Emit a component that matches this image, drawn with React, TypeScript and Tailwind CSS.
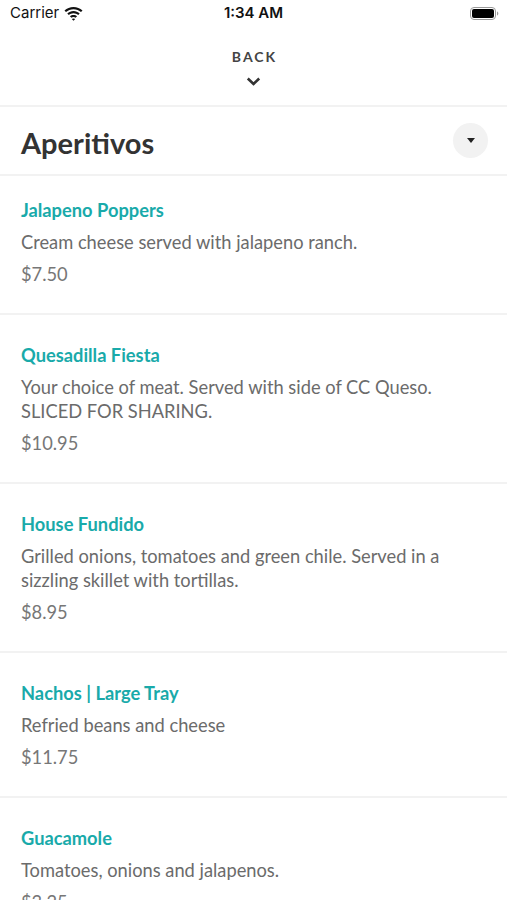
import React from "react";

const items = [
  { name: "Jalapeno Poppers", desc: ["Cream cheese served with jalapeno ranch."], price: "$7.50" },
  { name: "Quesadilla Fiesta", desc: ["Your choice of meat. Served with side of CC Queso.", "SLICED FOR SHARING."], price: "$10.95" },
  { name: "House Fundido", desc: ["Grilled onions, tomatoes and green chile. Served in a", "sizzling skillet with tortillas."], price: "$8.95" },
  { name: "Nachos | Large Tray", desc: ["Refried beans and cheese"], price: "$11.75" },
  { name: "Guacamole", desc: ["Tomatoes, onions and jalapenos."], price: "$3.25" },
];

function Wifi() {
  return (
    <svg width="19" height="14" viewBox="0 0 19 14" className="ml-[5px]">
      <path d="M9.5 2.2c2.9 0 5.5 1.1 7.5 2.9l1.5-1.6C16.1 1.3 12.9 0 9.5 0S2.9 1.3.5 3.5L2 5.1c2-1.8 4.6-2.9 7.5-2.9z" fill="#111" />
      <path d="M9.5 6.2c1.8 0 3.4.7 4.7 1.8l1.5-1.6C14 4.9 11.9 4 9.5 4S5 4.9 3.3 6.4L4.8 8c1.3-1.1 2.9-1.8 4.7-1.8z" fill="#111" />
      <path d="M9.5 10.1c.8 0 1.5.3 2 .7l1.6-1.6C12.1 8.4 10.9 7.9 9.5 7.9s-2.6.5-3.6 1.3l1.6 1.6c.5-.4 1.2-.7 2-.7z" fill="#111" />
      <path d="M9.5 13.8l1.7-1.8c-.5-.4-1.1-.6-1.7-.6s-1.2.2-1.7.6z" fill="#111" />
    </svg>
  );
}

function Battery() {
  return (
    <svg width="29" height="13" viewBox="0 0 29 13">
      <rect x="0.5" y="0.5" width="25" height="12" rx="3.5" fill="none" stroke="#999" />
      <rect x="2" y="2" width="22" height="9" rx="2" fill="#000" />
      <path d="M27 4.5v4c.8-.3 1.3-1.1 1.3-2s-.5-1.7-1.3-2z" fill="#999" />
    </svg>
  );
}

export default function App() {
  return (
    <div className="w-[507px] h-[900px] overflow-hidden bg-white" style={{ fontFamily: "Lato, 'Noto Sans', sans-serif" }}>
      {/* status bar */}
      <div className="relative h-[27px] flex items-center justify-between px-[10px]">
        <div className="flex items-center text-[15px] text-[#111]" style={{ fontFamily: "Inter, 'Liberation Sans', sans-serif" }}>
          <span>Carrier</span>
          <Wifi />
        </div>
        <div className="absolute left-0 right-0 text-center text-[15px] font-semibold text-[#111]" style={{ fontFamily: "Inter, 'Liberation Sans', sans-serif" }}>
          1:34 AM
        </div>
        <div className="mr-[-2px]">
          <Battery />
        </div>
      </div>
      {/* back header */}
      <div className="h-[80px] flex flex-col items-center border-b-2 border-[#f2f2f2]">
        <div className="mt-[21px] text-[14px] font-bold tracking-[2px] text-[#444] leading-[18px] pl-[2px]">BACK</div>
        <svg width="15" height="9" viewBox="0 0 15 9" className="mt-[11px]">
          <path d="M1.8 1.5l5.7 5.5 5.7-5.5" fill="none" stroke="#333" strokeWidth="2.6" />
        </svg>
      </div>
      {/* title row */}
      <div className="h-[69px] flex items-center justify-between pl-[21px] pr-[19px] border-b-2 border-[#f2f2f2]">
        <div className="text-[29px] font-bold text-[#333] leading-none pt-[3px]">Aperitivos</div>
        <div className="w-[35px] h-[35px] rounded-full bg-[#f2f2f2] flex items-center justify-center">
          <svg width="8" height="5" viewBox="0 0 8 5">
            <path d="M0 0h8L4 5z" fill="#222" />
          </svg>
        </div>
      </div>
      {/* items */}
      <div>
        {items.map((it, i) => (
          <div key={i} className={`px-[21px] ${i === 0 ? "pt-[22px]" : "pt-[28px]"} pb-[27px] border-b-2 border-[#f2f2f2]`}>
            <div className="text-[18.3px] font-bold text-[#19aaaa] leading-[24px]">{it.name}</div>
            <div className="mt-[8px] text-[18.3px] text-[#6b6b6b] leading-[24px]">
              {it.desc.map((d, j) => (
                <div key={j}>{d}</div>
              ))}
            </div>
            <div className="mt-[8px] text-[18.3px] text-[#777] leading-[24px]">{it.price}</div>
          </div>
        ))}
      </div>
    </div>
  );
}
